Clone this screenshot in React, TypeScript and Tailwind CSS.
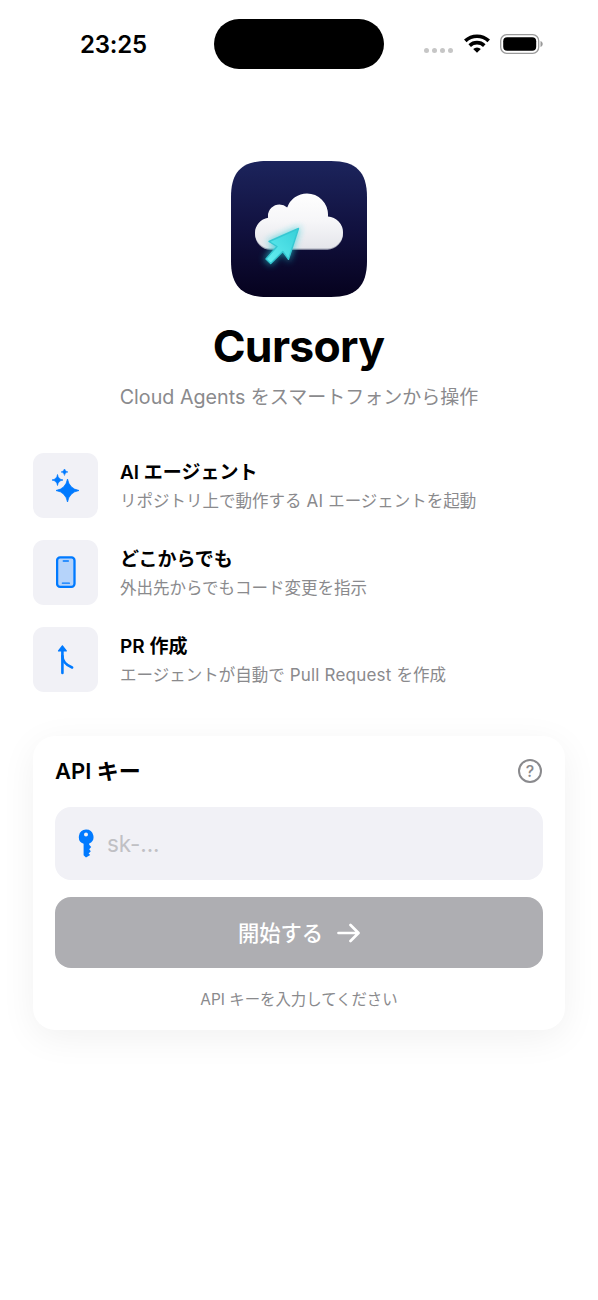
import type { ReactNode } from 'react'

const SparklesIcon = () => (
  <svg className="w-[27px] h-[33px]" viewBox="0 0 27 33" fill="#007aff">
    <path d="M15.5 10 Q17.2 19.8 27 21.5 Q17.2 23.2 15.5 33 Q13.8 23.2 4 21.5 Q13.8 19.8 15.5 10Z" stroke="#007aff" strokeWidth="0.8" strokeLinejoin="round" />
    <path d="M5.5 5.5 Q6.2 10.3 11 11 Q6.2 11.7 5.5 16.5 Q4.8 11.7 0 11 Q4.8 10.3 5.5 5.5Z" stroke="#007aff" strokeWidth="0.7" strokeLinejoin="round" />
    <path d="M12.5 -0.5 Q12.9 2.6 16 3 Q12.9 3.4 12.5 6.5 Q12.1 3.4 9 3 Q12.1 2.6 12.5 -0.5Z" stroke="#007aff" strokeWidth="0.5" strokeLinejoin="round" />
  </svg>
)

const PhoneIcon = () => (
  <svg className="w-[20px] h-[32px]" viewBox="0 0 20 32" fill="none" stroke="#007aff">
    <rect x="1.1" y="1.4" width="17.4" height="29.4" rx="3" fill="#b5d3fa" strokeWidth="2.3" />
    <path d="M7.3 5h5" strokeWidth="1.5" strokeLinecap="round" />
    <path d="M6.4 27.2h7" strokeWidth="1.3" strokeLinecap="round" />
  </svg>
)

const MergeIcon = () => (
  <svg className="w-[17px] h-[31px]" viewBox="0 0 17 31" fill="none" stroke="#007aff" strokeWidth="2.6" strokeLinecap="round">
    <path d="M5.4 5v24" />
    <path d="M5.4 12c0 6 3.5 9 9.7 11.5" />
    <path d="M5.4 1.8 9.3 6.9H1.5Z" fill="#007aff" strokeWidth="1.2" strokeLinejoin="round" />
  </svg>
)

const En = ({ children }: { children: ReactNode }) => (
  <span className="text-[17px] tracking-[0.2px]">{children}</span>
)

const features: { title: string; text: ReactNode; icon: ReactNode }[] = [
  { title: 'AI エージェント', text: <>リポジトリ上で動作する<En> AI </En>エージェントを起動</>, icon: <SparklesIcon /> },
  { title: 'どこからでも', text: '外出先からでもコード変更を指示', icon: <PhoneIcon /> },
  { title: 'PR 作成', text: <>エージェントが自動で<En> Pull Request </En>を作成</>, icon: <MergeIcon /> },
]

const StatusBar = () => (
  <div className="flex h-[69px] pt-[19px]">
    <div className="w-[214px] pl-[80px] pt-[10px] text-[24px] leading-[32px] font-semibold tracking-[-0.2px]">23:25</div>
    <div className="w-[170px] h-[50px] rounded-full bg-black" />
    <div className="flex items-start pl-[40px]">
      <div className="flex gap-[3px] mt-[29px]">
        <div className="size-[5px] rounded-full bg-[#c6c6c6]" />
        <div className="size-[5px] rounded-full bg-[#c6c6c6]" />
        <div className="size-[5px] rounded-full bg-[#c6c6c6]" />
        <div className="size-[5px] rounded-full bg-[#c6c6c6]" />
      </div>
      <svg className="w-[26px] h-[19px] ml-[11px] mt-[15px]" viewBox="0 0 26 19" fill="none" stroke="#000">
        <path d="M1.3 6.9a17 17 0 0 1 23.4 0" strokeWidth="3.7" />
        <path d="M5.7 11.6a10.5 10.5 0 0 1 14.6 0" strokeWidth="3.6" />
        <path d="M13 18.8 9.2 15a5.5 5.5 0 0 1 7.6 0Z" fill="#000" stroke="none" />
      </svg>
      <svg className="w-[43px] h-[20px] ml-[10px] mt-[15px]" viewBox="0 0 43 20">
        <rect x="0.7" y="0.7" width="38" height="18.6" rx="6" fill="none" stroke="#9a9a9a" strokeWidth="1.3" />
        <rect x="3.2" y="3.2" width="33" height="13.6" rx="4" fill="#000" />
        <path d="M40.5 7v6c1.4-.5 2.2-1.6 2.2-3s-.8-2.5-2.2-3Z" fill="#9a9a9a" />
      </svg>
    </div>
  </div>
)

const AppLogo = () => (
  <svg className="w-[136px] h-[136px]" viewBox="0 0 136 136">
    <defs>
      <linearGradient id="night" x1="0" y1="0" x2="0" y2="1">
        <stop offset="0" stopColor="#1c245c" />
        <stop offset="0.5" stopColor="#11113f" />
        <stop offset="1" stopColor="#06021e" />
      </linearGradient>
      <linearGradient id="cloudFill" x1="0" y1="0" x2="0" y2="1">
        <stop offset="0" stopColor="#ffffff" />
        <stop offset="0.5" stopColor="#f6f6f8" />
        <stop offset="1" stopColor="#e3e4e9" />
      </linearGradient>
      <linearGradient id="arrow" x1="1" y1="0" x2="0" y2="1">
        <stop offset="0" stopColor="#35d0d8" />
        <stop offset="1" stopColor="#66eef2" />
      </linearGradient>
      <clipPath id="cloud">
        <circle cx="39.5" cy="72" r="15.5" />
        <circle cx="48.5" cy="55" r="11.5" />
        <circle cx="76" cy="53.5" r="21" />
        <circle cx="96" cy="71.5" r="16" />
        <rect x="39.5" y="54" width="57" height="33.5" />
      </clipPath>
      <filter id="glow" x="-50%" y="-50%" width="200%" height="200%">
        <feGaussianBlur stdDeviation="3.5" />
      </filter>
    </defs>
    <path d="M36 0H100C125 0 136 11 136 36V100C136 125 125 136 100 136H36C11 136 0 125 0 100V36C0 11 11 0 36 0Z" fill="url(#night)" />
    <g transform="translate(0 1.2)">
      <rect x="20" y="30" width="96" height="60" fill="#a3a6b5" clipPath="url(#cloud)" />
    </g>
    <rect x="20" y="30" width="96" height="60" fill="url(#cloudFill)" clipPath="url(#cloud)" />
    <path d="M68 67 57.7 98.8 51.5 89 39.7 103 34.3 97.8 44 85.5 37.7 80.2Z" fill="#20cbd5" stroke="#20cbd5" strokeWidth="2" opacity="0.7" filter="url(#glow)" />
    <path d="M67.5 67.5 57.5 98.3 51.8 90.5 39.7 102.5 35 98 46 85.5 38 80.5Z" fill="url(#arrow)" stroke="#35c8d2" strokeWidth="1.4" strokeLinejoin="round" />
  </svg>
)

const KeyIcon = () => (
  <svg className="w-[16px] h-[29px]" viewBox="0 0 16 29">
    <path fillRule="evenodd" d="M8 .5a7.4 7.4 0 0 1 3.2 14.1v1.2l2 2.2-2 2.3 1.6 2-2.2 2.2 1.6 1.6L8 28.5l-2.4-2.2V14.8A7.4 7.4 0 0 1 8 .5Zm0 3a2 2 0 1 0 0 4a2 2 0 0 0 0-4Z" fill="#007aff" />
  </svg>
)

const HelpIcon = () => (
  <div className="flex items-center justify-center size-[24px] rounded-full border-2 border-[#8a8a8d] text-[16px] leading-none font-medium text-[#8a8a8d]">?</div>
)

const App = () => {
  return (
    <div className="w-[598px] h-[1300px] overflow-hidden bg-white text-black font-['Inter','Noto_Sans_CJK_JP',sans-serif]">
      <StatusBar />
      <div className="flex flex-col items-center pt-[91.5px]">
        <AppLogo />
        <h1 className="mt-[21px] mr-[1px] text-[44.5px] leading-[56px] font-bold tracking-[-0.7px]">Cursory</h1>
        <p className="mt-[9px] text-[19px] leading-[28px] text-[#8a8a8d] whitespace-nowrap">
          <span className="text-[19.7px]">Cloud Agents </span>をスマートフォンから操作
        </p>
      </div>
      <div className="flex flex-col gap-[22px] px-[33px] pt-[41px]">
        {features.map((f) => (
          <div key={f.title} className="flex items-center gap-[22px] h-[65px]">
            <div className="flex items-center justify-center size-[65px] rounded-[11px] bg-[#f1f1f6]">{f.icon}</div>
            <div className="pt-[5px] whitespace-nowrap">
              <div className="text-[19px] leading-[26px] font-semibold">{f.title}</div>
              <div className="text-[16.5px] leading-[30px] text-[#8a8a8d]">{f.text}</div>
            </div>
          </div>
        ))}
      </div>
      <div className="mx-[33px] mt-[44px] h-[294px] rounded-[22px] bg-white px-[22px] shadow-[0_8px_36px_rgba(0,0,0,0.06)]">
        <div className="flex items-center justify-between h-[71px] pr-[1px]">
          <h2 className="text-[22px] leading-[30px] font-semibold">API キー</h2>
          <HelpIcon />
        </div>
        <div className="flex items-center h-[73px] pl-[23px] rounded-[16px] bg-[#f1f1f6]">
          <KeyIcon />
          <span className="ml-[13px] pt-[2px] text-[22.5px] tracking-[-0.1px] text-[#c0c0c4]">sk-...</span>
        </div>
        <button className="flex items-center justify-center gap-[14px] w-full h-[71px] pt-[1px] mt-[17px] rounded-[16px] bg-[#aeaeb2] text-[21.3px] font-medium text-white">
          <span className="pt-[2px]">開始する</span>
          <svg className="w-[23px] h-[20px]" viewBox="0 0 23 20" fill="none" stroke="#fff" strokeWidth="2.7" strokeLinecap="round" strokeLinejoin="round">
            <path d="M1.5 10h19.5M13.5 2l8 8-8 8" />
          </svg>
        </button>
        <p className="mt-[20px] text-[15.4px] leading-[24px] text-center text-[#8a8a8d]">API キーを入力してください</p>
      </div>
    </div>
  )
}

export default App
